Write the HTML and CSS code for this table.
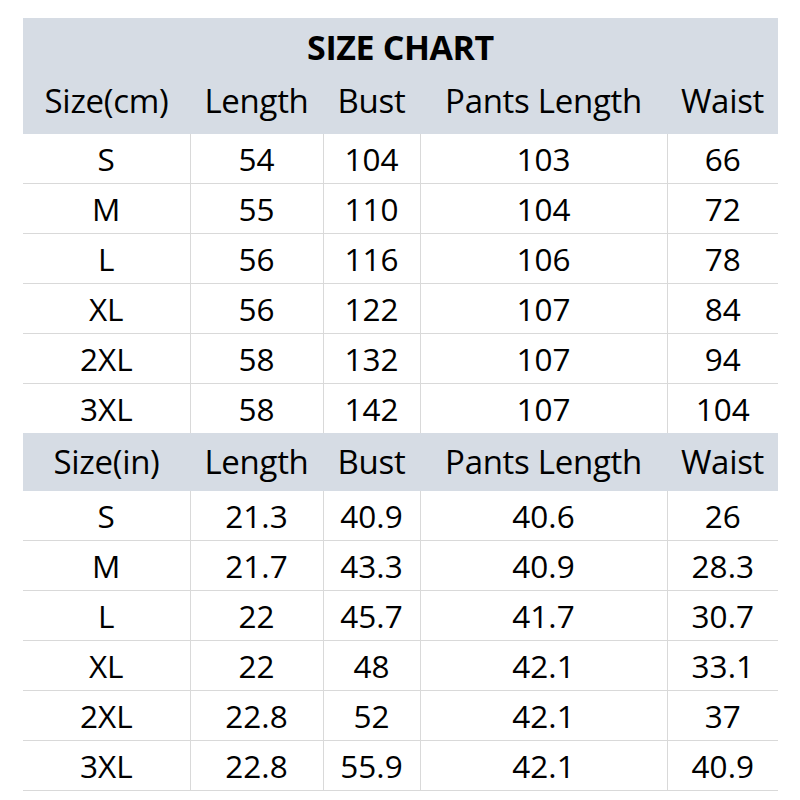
FILE: index.html
```html
<!DOCTYPE html>
<html>
<head>
<meta charset="utf-8">
<link rel="stylesheet" href="styles.css">
</head>
<body>
<table class="chart">
  <colgroup>
    <col class="c1"><col class="c2"><col class="c3"><col class="c4"><col class="c5">
  </colgroup>
  <thead>
    <tr class="title-row"><th colspan="5">SIZE CHART</th></tr>
    <tr class="head-row first-head"><th>Size(cm)</th><th>Length</th><th>Bust</th><th>Pants Length</th><th>Waist</th></tr>
  </thead>
  <tbody>
    <tr><td>S</td><td>54</td><td>104</td><td>103</td><td>66</td></tr>
    <tr><td>M</td><td>55</td><td>110</td><td>104</td><td>72</td></tr>
    <tr><td>L</td><td>56</td><td>116</td><td>106</td><td>78</td></tr>
    <tr><td>XL</td><td>56</td><td>122</td><td>107</td><td>84</td></tr>
    <tr><td>2XL</td><td>58</td><td>132</td><td>107</td><td>94</td></tr>
    <tr class="last"><td>3XL</td><td>58</td><td>142</td><td>107</td><td>104</td></tr>
    <tr class="head-row"><th>Size(in)</th><th>Length</th><th>Bust</th><th>Pants Length</th><th>Waist</th></tr>
    <tr><td>S</td><td>21.3</td><td>40.9</td><td>40.6</td><td>26</td></tr>
    <tr><td>M</td><td>21.7</td><td>43.3</td><td>40.9</td><td>28.3</td></tr>
    <tr><td>L</td><td>22</td><td>45.7</td><td>41.7</td><td>30.7</td></tr>
    <tr><td>XL</td><td>22</td><td>48</td><td>42.1</td><td>33.1</td></tr>
    <tr><td>2XL</td><td>22.8</td><td>52</td><td>42.1</td><td>37</td></tr>
    <tr><td>3XL</td><td>22.8</td><td>55.9</td><td>42.1</td><td>40.9</td></tr>
  </tbody>
</table>
</body>
</html>
```
FILE: styles.css
```css
html, body {
  margin: 0;
  padding: 0;
  background: #ffffff;
}
body {
  padding: 18px 22px 0 23px;
  font-family: "Open Sans", "Noto Sans", sans-serif;
  color: #000;
}
.chart {
  width: 755px;
  table-layout: fixed;
  border-collapse: collapse;
  border-spacing: 0;
}
.c1 { width: 167px; }
.c2 { width: 133px; }
.c3 { width: 97px; }
.c4 { width: 247px; }
.c5 { width: 111px; }
.chart th, .chart td {
  padding: 0;
  text-align: center;
  vertical-align: middle;
  white-space: nowrap;
  line-height: 1.25;
}
.chart tr.head-row {
  height: 58px;
}
.chart th {
  background: #d6dce4;
  font-weight: 400;
  font-size: 33px;
  letter-spacing: -0.3px;
}
.chart tr.title-row {
  height: 58px;
}
.title-row th {
  font-weight: 700;
  font-size: 34px;
  letter-spacing: -0.4px;
}
.first-head th {
  padding-bottom: 8px;
}
.chart td {
  font-size: 31.5px;
  height: 49px;
  border-bottom: 1px solid #d9d9d9;
  border-left: 1px solid #d9d9d9;
}
.chart td:first-child {
  border-left: none;
}
.chart tr.last td {
  border-bottom: none;
}
```
